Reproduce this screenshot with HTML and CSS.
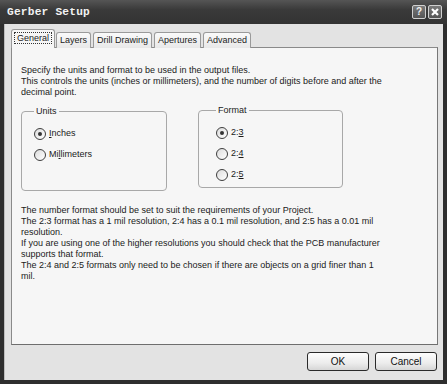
FILE: index.html
```html
<!DOCTYPE html>
<html lang="en">
<head>
    <meta charset="UTF-8">
    <title>Gerber Setup</title>
    <link rel="stylesheet" href="styles.css">
</head>
<body>
    <div class="window">
        <div class="titlebar">
            <span class="title">Gerber Setup</span>
            <span class="tb-btn">?</span>
            <span class="tb-btn close">
                <svg width="8" height="8" viewBox="0 0 8 8"><path d="M1 1L7 7M7 1L1 7" stroke="#fff" stroke-width="2.2"/></svg>
            </span>
        </div>
        <div class="client">
            <div class="tabs">
                <div class="tab active"><span class="focus">General</span></div>
                <div class="tab">Layers</div>
                <div class="tab">Drill Drawing</div>
                <div class="tab">Apertures</div>
                <div class="tab">Advanced</div>
            </div>
            <div class="panel">
                <p class="intro">Specify the units and format to be used in the output files.<br>
                This controls the units (inches or millimeters), and the number of digits before and after the<br>
                decimal point.</p>

                <div class="groups">
                    <fieldset class="group units">
                        <legend>Units</legend>
                        <div class="option"><span class="radio checked"></span><span><u>I</u>nches</span></div>
                        <div class="option"><span class="radio"></span><span>Mi<u>l</u>limeters</span></div>
                    </fieldset>
                    <fieldset class="group format">
                        <legend>Format</legend>
                        <div class="option"><span class="radio checked"></span><span>2:<u>3</u></span></div>
                        <div class="option"><span class="radio"></span><span>2:<u>4</u></span></div>
                        <div class="option"><span class="radio"></span><span>2:<u>5</u></span></div>
                    </fieldset>
                </div>

                <p class="notes">The number format should be set to suit the requirements of your Project.<br>
                The 2:3 format has a 1 mil resolution, 2:4 has a 0.1 mil resolution, and 2:5 has a 0.01 mil<br>
                resolution.<br>
                If you are using one of the higher resolutions you should check that the PCB manufacturer<br>
                supports that format.<br>
                The 2:4 and 2:5 formats only need to be chosen if there are objects on a grid finer than 1<br>
                mil.</p>
            </div>
            <div class="buttons">
                <button class="btn">OK</button>
                <button class="btn">Cancel</button>
            </div>
        </div>
    </div>
</body>
</html>
```
FILE: styles.css
```css
body {
    margin: 0;
    padding: 0;
    background-color: #2e2e2e;
    font-family: "Liberation Sans", Arial, sans-serif;
}
.window {
    width: 447px;
    height: 384px;
    box-sizing: border-box;
    background-color: #2e2e2e;
    padding: 0 4px 4px 4px;
    display: flex;
    flex-direction: column;
}
.titlebar {
    height: 24px;
    margin: 0 -4px;
    padding: 0 5px 0 7px;
    display: flex;
    align-items: center;
    gap: 2px;
    background: linear-gradient(#555, #3a3a3a 40%, #333);
}
.title {
    flex: 1;
    font-family: "Liberation Mono", monospace;
    font-weight: bold;
    font-size: 11.2px;
    color: #f2f2f2;
    letter-spacing: 0.2px;
}
.tb-btn {
    width: 12px;
    height: 12px;
    border: 1px solid #d0d0d0;
    border-radius: 2px;
    background: linear-gradient(#7a7a7a, #555);
    color: #f0f0f0;
    font-size: 10px;
    font-weight: bold;
    line-height: 12px;
    text-align: center;
    display: flex;
    align-items: center;
    justify-content: center;
}
.client {
    flex: 1;
    background-color: #e3e3e3;
    border-left: 1px solid #bdbdbd;
    padding: 5px 5px 0 6px;
    display: flex;
    flex-direction: column;
}
.tabs {
    display: flex;
    align-items: flex-end;
    gap: 2px;
    padding-left: 1px;
    margin-bottom: -1px;
    position: relative;
    z-index: 1;
}
.tab {
    height: 15px;
    padding: 0 3px;
    font-size: 9px;
    line-height: 15px;
    color: #222;
    border: 1px solid #9a9a9a;
    border-bottom: none;
    border-radius: 3px 3px 0 0;
    background: linear-gradient(#fafafa, #e8e8e8);
}
.tab.active {
    height: 18px;
    line-height: 17px;
    background: #f6f6f6;
    margin-left: -1px;
    margin-right: -1px;
    padding: 0 2px;
}
.tab .focus {
    border: 1px dotted #333;
    padding: 0 2px;
}
.panel {
    height: 298px;
    box-sizing: border-box;
    background-color: #f6f6f6;
    border: 1px solid #8a8a8a;
    border-right-color: #777;
    border-bottom-color: #6e6e6e;
    padding: 17px 10px 0 9px;
    font-size: 9px;
    line-height: 11px;
    color: #1a1a1a;
}
.panel p {
    margin: 0;
}
.groups {
    display: flex;
    gap: 31px;
    margin-top: 8px;
}
.group {
    margin: 0;
    border: 1px solid #a8a8a8;
    border-radius: 4px;
    padding: 6px 0 0 5px;
    box-sizing: border-box;
}
.group legend {
    padding: 0 2px;
    color: #222;
}
.units {
    width: 146px;
    height: 85px;
    padding-left: 12px;
}
.format {
    width: 145px;
    height: 83px;
    margin-top: -1px;
    padding-left: 17px;
}
.option {
    display: flex;
    align-items: center;
    gap: 3px;
    height: 21px;
}
.radio {
    width: 10px;
    height: 10px;
    border: 1px solid #3e3e3e;
    border-radius: 50%;
    background: linear-gradient(135deg, #dcdcdc, #fff);
    display: flex;
    align-items: center;
    justify-content: center;
}
.radio.checked::after {
    content: "";
    width: 4px;
    height: 4px;
    border-radius: 50%;
    background-color: #333;
}
.notes {
    margin-top: 14px !important;
}
.buttons {
    display: flex;
    justify-content: flex-end;
    gap: 6px;
    padding-top: 7px;
    padding-right: 1px;
}
.btn {
    width: 62px;
    height: 19px;
    border: 1px solid #2a2a2a;
    border-radius: 3px;
    background: linear-gradient(#fdfdfd, #ececec 60%, #d6d6d6);
    font-family: "Liberation Sans", Arial, sans-serif;
    font-size: 10px;
    color: #111;
    padding: 0;
}
```
